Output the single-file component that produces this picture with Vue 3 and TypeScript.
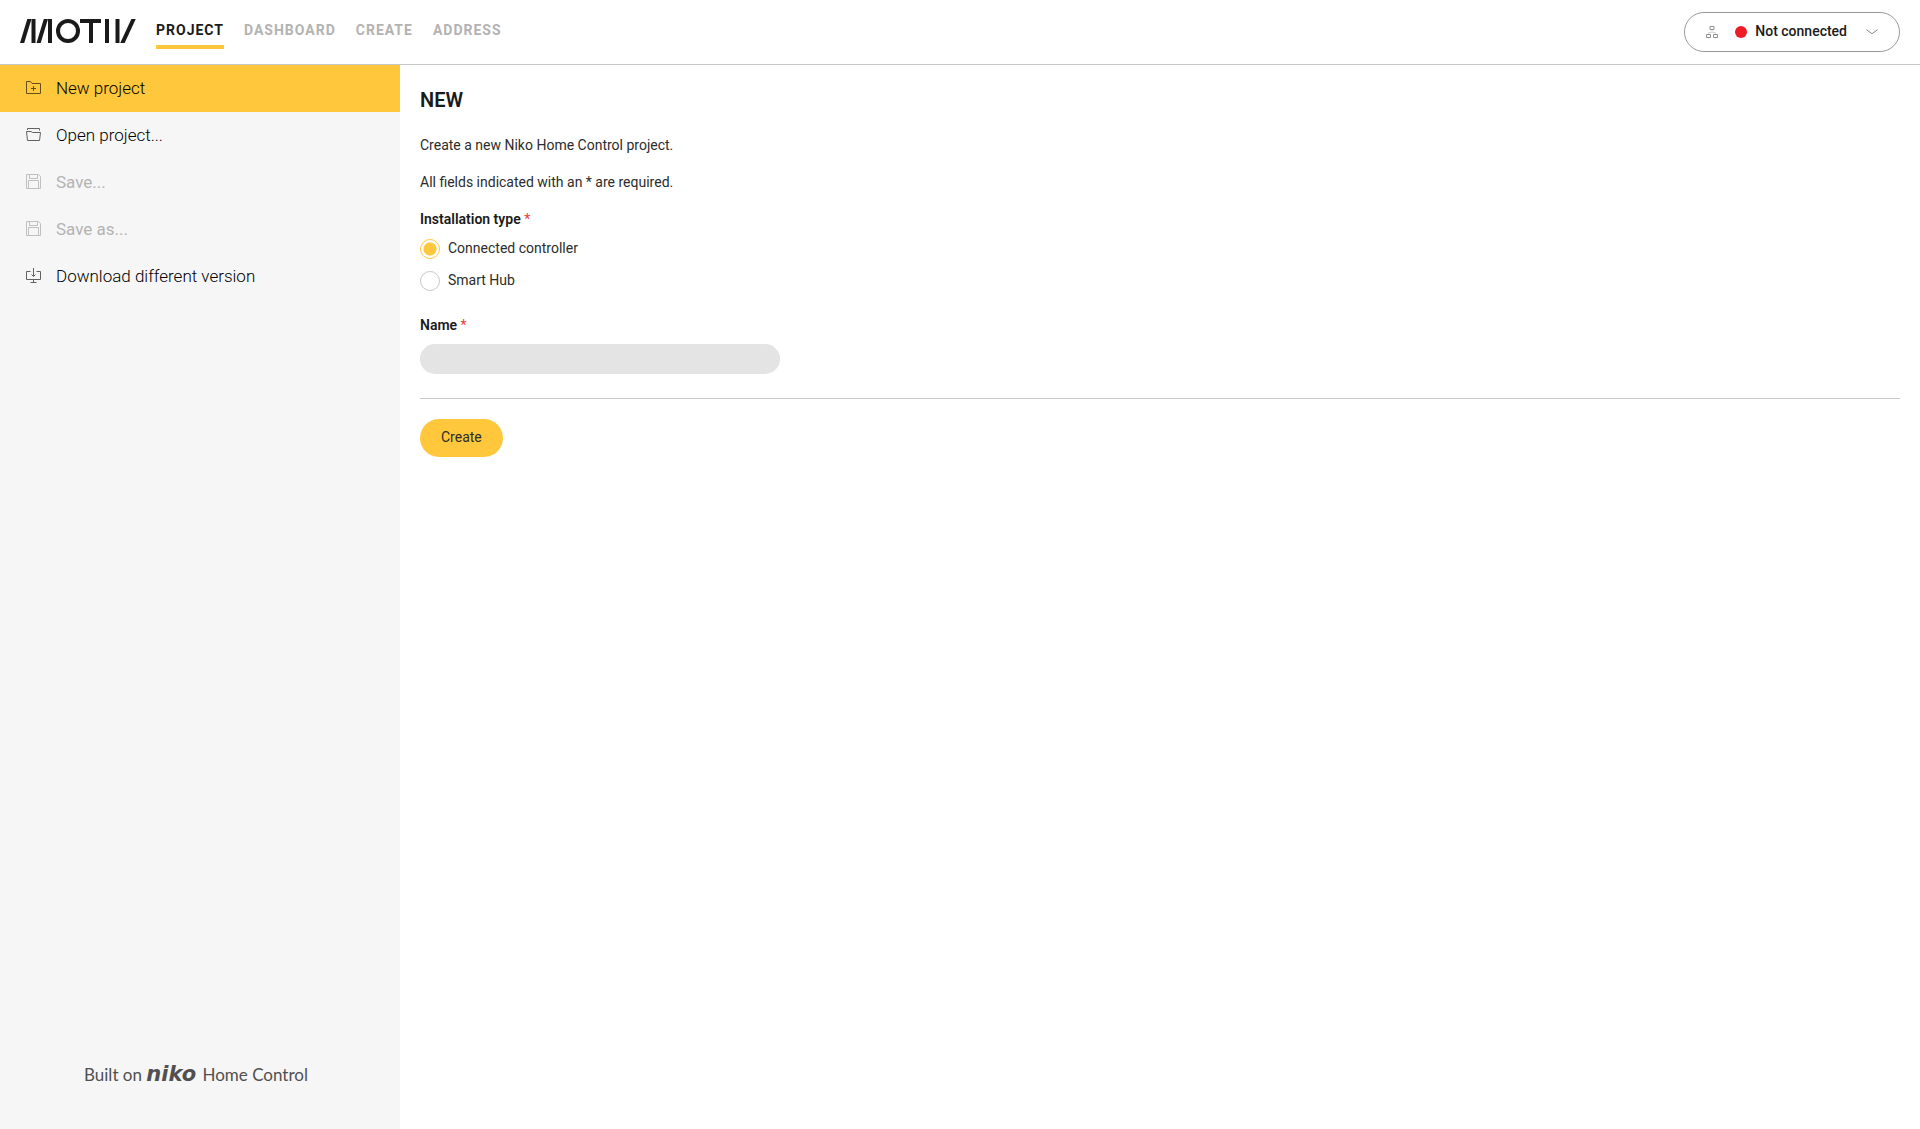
<script setup lang="ts">
import { ref } from 'vue'

interface MenuItem {
  label: string
  icon: 'new' | 'open' | 'save' | 'download'
  active?: boolean
  disabled?: boolean
}

const tabs = ['PROJECT', 'DASHBOARD', 'CREATE', 'ADDRESS']
const activeTab = ref('PROJECT')

const menu: MenuItem[] = [
  { label: 'New project', icon: 'new', active: true },
  { label: 'Open project...', icon: 'open' },
  { label: 'Save...', icon: 'save', disabled: true },
  { label: 'Save as...', icon: 'save', disabled: true },
  { label: 'Download different version', icon: 'download' },
]

const installation = ref('controller')
const name = ref('')
</script>

<template>
  <div class="app">
    <header class="topbar">
      <svg class="logo" width="116" height="24" viewBox="0 0 116 24" role="img" aria-label="Motiv">
        <defs>
          <clipPath id="logo-band"><rect width="116" height="24" /></clipPath>
        </defs>
        <g clip-path="url(#logo-band)" fill="none" stroke="#1a1a1a" stroke-width="4">
          <path d="M1.5 26 10 -2M18 26 26.500 -2" />
          <path d="M13.500 0V24M30 0V24" />
          <circle cx="48" cy="12" r="10" />
          <path d="M60 2H81M71 2V24M87 0V24M97.500 0V24" />
          <path d="M101.500 26 114.500 -2" />
        </g>
      </svg>
      <nav class="tabs">
        <a
          v-for="tab in tabs"
          :key="tab"
          href="#"
          class="tab"
          :class="{ current: tab === activeTab }"
          @click.prevent="activeTab = tab"
        >{{ tab }}</a>
      </nav>
      <button type="button" class="status">
        <svg width="12" height="14" viewBox="0 0 12 14" fill="none" stroke="#8f8f8f">
          <path d="M4 1.500h4v3h-4zM.5 9.500h4v3h-4zM7.500 9.500h4v3h-4z" />
          <path d="M6 5v2M2.500 9V7.500h7V9" stroke="#d8d8d8" />
        </svg>
        <span class="dot"></span>
        <span class="status-text">Not connected</span>
        <svg width="12" height="6" viewBox="0 0 12 6" fill="none" stroke="#8a8a8a">
          <path d="M.3 .7 6 4.700 11.700 .7" />
        </svg>
      </button>
    </header>

    <div class="body">
      <aside class="sidebar">
        <nav class="menu">
          <button
            v-for="item in menu"
            :key="item.label"
            type="button"
            class="menu-item"
            :class="{ active: item.active }"
            :disabled="item.disabled"
          >
            <svg class="menu-icon" width="15" height="15" viewBox="0 0 15 15" fill="none" stroke="currentColor">
              <template v-if="item.icon === 'new'">
                <path d="M.5 13.500V1.500H4.500L6 3.500H14.500V13.500Z" />
                <path d="M7.500 6V11M5 8.500H10" />
              </template>
              <template v-else-if="item.icon === 'open'">
                <path d="M1.500 3V1.500H13.500V3.500" />
                <path d="M1.500 13.500.5 4.500H5L6.500 5.500H14.500L13.500 13.500Z" />
              </template>
              <template v-else-if="item.icon === 'save'">
                <path d="M.5 .5H12.500L14.500 2.500V14.500H.5Z" />
                <path d="M3.500 .5V4.500H11.500V.5M2.500 14.500V6.500H12.500V14.500" />
              </template>
              <template v-else>
                <path d="M4.500 3.500H.5V11.500H14.500V3.500H10.500" />
                <path d="M7.500 0V8M5.500 6.500 7.500 8.500 9.500 6.500M7.500 11.500V14.500M4.500 14.500H10.500" />
              </template>
            </svg>
            <span>{{ item.label }}</span>
          </button>
        </nav>
        <p class="built-on">Built on <span class="niko">niko</span> Home Control</p>
      </aside>

      <main class="content">
        <h1>NEW</h1>
        <p class="intro">Create a new Niko Home Control project.</p>
        <p class="intro">All fields indicated with an * are required.</p>
        <form @submit.prevent>
          <fieldset>
            <legend class="field-label">Installation type <span class="required">*</span></legend>
            <label class="option">
              <input v-model="installation" type="radio" name="installation" value="controller" />
              <span>Connected controller</span>
            </label>
            <label class="option">
              <input v-model="installation" type="radio" name="installation" value="hub" />
              <span>Smart Hub</span>
            </label>
          </fieldset>
          <label class="field-label" for="project-name">Name <span class="required">*</span></label>
          <input id="project-name" v-model="name" class="text-input" type="text" />
          <div class="actions">
            <button type="submit" class="create">Create</button>
          </div>
        </form>
      </main>
    </div>
  </div>
</template>

<style>
body {
  margin: 0;
  background: #fff;
}
</style>

<style scoped>
.app {
  display: flex;
  flex-direction: column;
  min-height: 100vh;
  font-family: Roboto, 'Liberation Sans', sans-serif;
  font-size: 14px;
  line-height: 20px;
  color: #1a1a1a;
}

button,
input {
  font: inherit;
  color: inherit;
}

.topbar {
  display: flex;
  align-items: center;
  height: 64px;
  padding: 0 20px;
  border-bottom: 1px solid #c8c8c8;
}

.logo {
  margin: 0 20px 2px 0;
}

.tabs {
  display: flex;
  gap: 20px;
  flex: 1;
}

.tab {
  padding: 5px 0;
  border-bottom: 4px solid transparent;
  color: #b3b3b3;
  font-weight: 700;
  letter-spacing: 1px;
  text-decoration: none;
}

.tab.current {
  border-color: #ffc73c;
  color: #1a1a1a;
}

.status {
  display: flex;
  align-items: center;
  height: 40px;
  padding: 0 21px;
  border: 1px solid #999;
  border-radius: 20px;
  background: #fff;
  font-weight: 500;
}

.dot {
  width: 12px;
  height: 12px;
  margin: 0 8px 0 17px;
  border-radius: 50%;
  background: #ee1c25;
}

.status-text {
  margin-right: 19px;
  padding-bottom: 2px;
}

.body {
  display: flex;
  flex: 1;
}

.sidebar {
  display: flex;
  flex-direction: column;
  justify-content: space-between;
  width: 400px;
  background: #f6f6f6;
}

.menu {
  display: flex;
  flex-direction: column;
}

.menu-item {
  display: flex;
  align-items: center;
  gap: 15px;
  height: 47px;
  padding: 0 26px 2px;
  border: 0;
  background: none;
  color: #000;
  font-size: 17px;
  font-weight: 300;
  text-align: left;
}

.menu-item.active {
  background: #ffc73c;
}

.menu-item:disabled {
  color: #b3b3b3;
  font-weight: 400;
}

.menu-icon {
  opacity: 0.6;
}

.menu-item:disabled .menu-icon {
  opacity: 0.8;
}

.built-on {
  margin: 0 0 42px 84px;
  color: #505050;
  font-family: Lato, sans-serif;
  font-size: 17px;
  line-height: 24px;
}

.niko {
  margin-right: 2px;
  font-family: 'DejaVu Sans', sans-serif;
  font-size: 21px;
  font-style: italic;
  font-weight: 700;
}

.content {
  flex: 1;
  padding: 20px;
}

h1 {
  margin: 0 0 20px;
  font-size: 20px;
  font-weight: 600;
  line-height: 30px;
}

.intro {
  margin: 0 0 17px;
  color: #2c2c2c;
}

fieldset {
  margin: 0;
  padding: 0 0 24px;
  border: 0;
}

.field-label {
  display: block;
  padding: 0;
  font-weight: 600;
}

.required {
  color: #ee3a3a;
  font-weight: 400;
}

.option {
  display: flex;
  gap: 8px;
  margin-top: 10px;
  color: #2c2c2c;
  line-height: 18px;
}

.option + .option {
  margin-top: 12px;
}

.option input {
  appearance: none;
  width: 20px;
  height: 20px;
  margin: 0;
  border: 1px solid #c8c8c8;
  border-radius: 50%;
  background: #fff;
}

.option input:checked {
  border-color: #ffc73c;
  background: radial-gradient(circle, #ffc73c 6px, #fff 7px);
}

.text-input {
  display: block;
  box-sizing: border-box;
  width: 360px;
  height: 30px;
  margin-top: 9px;
  padding: 0 15px;
  border: 0;
  border-radius: 15px;
  background: #e4e4e4;
}

.actions {
  margin-top: 24px;
  padding-top: 20px;
  border-top: 1px solid #c8c8c8;
}

.create {
  height: 38px;
  padding: 0 21px 2px;
  border: 0;
  border-radius: 19px;
  background: #ffc73c;
  color: #2c2c2c;
}
</style>
